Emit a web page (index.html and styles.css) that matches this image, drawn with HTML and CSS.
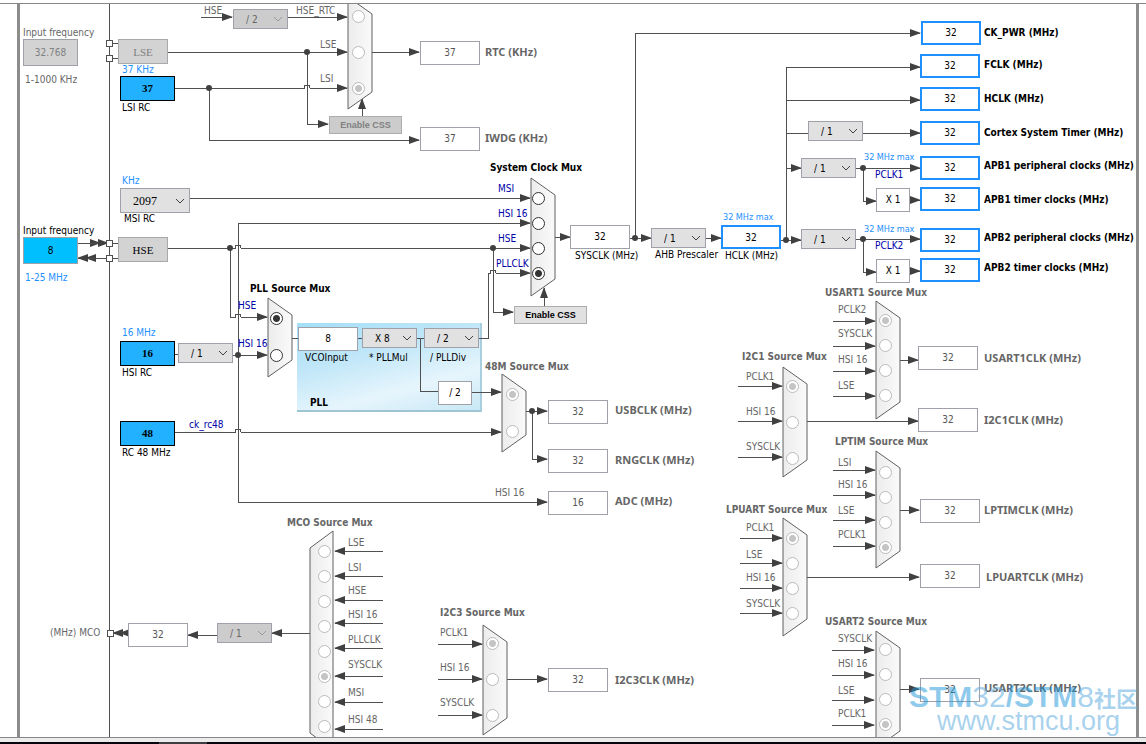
FILE: index.html
```html
<!DOCTYPE html>
<html lang="en">
<head>
  <meta charset="UTF-8" />
  <meta name="viewport" content="width=device-width, initial-scale=1.0"/>
  <title>Clock Configuration</title>
  <link rel="stylesheet" href="styles.css">
</head>
<body>
  <main class="stage" id="stage">
    <div class="chip"></div>
    <div class="pll"></div>

    <svg class="wires" aria-hidden="true">
      <defs>
        <marker id="arrow" markerWidth="11" markerHeight="8" refX="10" refY="4" orient="auto" markerUnits="userSpaceOnUse">
          <path class="head" d="M0 0 L11 4 L0 8 Z"/>
        </marker>
        <linearGradient id="muxFill">
          <stop offset="0" stop-color="#ececec"/>
          <stop offset="1" stop-color="#fafafa"/>
        </linearGradient>
      </defs>

      <!-- chip edge -->
      <path class="wire" d="M109 0 V2000"/>

      <!-- oscillators, pins -->
      <path class="wire" d="M112 43 H118 M112 58 H118 M112 243 H118 M112 258 H118"/>
      <path class="wire arrow" d="M78 243 H100"/>
      <path class="wire arrow" d="M90 243 H108"/>
      <path class="wire arrow" d="M106 258 H86"/>
      <path class="wire arrow" d="M95 258 H78"/>
      <path class="wire arrow" d="M128 633 H120"/>
      <path class="wire arrow" d="M124 633 H113"/>
      <rect class="pin" x="106" y="40" width="6" height="6"/>
      <rect class="pin" x="106" y="55" width="6" height="6"/>
      <rect class="pin" x="106" y="240" width="6" height="6"/>
      <rect class="pin" x="106" y="255" width="6" height="6"/>
      <rect class="pin" x="107" y="630" width="6" height="6"/>

      <!-- RTC / IWDG -->
      <path class="wire arrow" d="M201 17 H232"/>
      <path class="wire arrow" d="M288 17 H347"/>
      <path class="wire arrow" d="M168 52 H347"/>
      <path class="wire arrow" d="M175 88 H304 Q304 85 307 85 Q310 85 310 88 H347"/>
      <path class="wire arrow" d="M307 52 V124 H328"/>
      <path class="wire arrow" d="M209 88 V140 H419"/>
      <path class="wire arrow" d="M362 116 V99"/>
      <path class="wire arrow" d="M372 52 H419"/>

      <!-- system clock mux -->
      <path class="wire arrow" d="M190 198 H530"/>
      <path class="wire arrow" d="M238 355 V223 H530"/>
      <path class="wire arrow" d="M168 248 H235 Q235 245 238 245 Q241 245 241 248 H530"/>
      <path class="wire arrow" d="M479 338 H488 V273 H490 Q490 270 493 270 Q496 270 496 273 H530"/>
      <path class="wire arrow" d="M493 248 V312 H513"/>
      <path class="wire arrow" d="M544 306 V288"/>
      <path class="wire arrow" d="M555 237 H570"/>

      <!-- PLL -->
      <path class="wire arrow" d="M230 248 V317 H235 Q235 314 238 314 Q241 314 241 317 H267"/>
      <path class="wire" d="M175 354 H178"/>
      <path class="wire arrow" d="M233 355 H267"/>
      <path class="wire" d="M292 338 H298 M358 338 H362 M417 338 H424 M420 338 V391 H438"/>
      <path class="wire arrow" d="M472 392 H501"/>
      <path class="wire arrow" d="M175 432 H235 Q235 429 238 429 Q241 429 241 432 H501"/>
      <path class="wire arrow" d="M526 411 H547"/>
      <path class="wire arrow" d="M532 411 V459 H547"/>
      <path class="wire arrow" d="M238 355 V502 H547"/>

      <!-- HCLK tree -->
      <path class="wire arrow" d="M630 238 H651"/>
      <path class="wire arrow" d="M635 238 V33 H920"/>
      <path class="wire arrow" d="M706 238 H721"/>
      <path class="wire arrow" d="M781 240 H801"/>
      <path class="wire arrow" d="M786 240 V67 H920"/>
      <path class="wire arrow" d="M786 100 H920"/>
      <path class="wire" d="M786 133 H808"/>
      <path class="wire arrow" d="M863 133 H920"/>
      <path class="wire arrow" d="M786 168 H801"/>
      <path class="wire arrow" d="M856 168 H920"/>
      <path class="wire arrow" d="M863 168 V201 H876"/>
      <path class="wire arrow" d="M910 200 H920"/>
      <path class="wire arrow" d="M856 239 H920"/>
      <path class="wire arrow" d="M863 239 V272 H876"/>
      <path class="wire arrow" d="M910 271 H920"/>

      <!-- peripheral outputs -->
      <path class="wire arrow" d="M899 360 H918"/>
      <path class="wire arrow" d="M807 421 H918"/>
      <path class="wire arrow" d="M900 510 H919"/>
      <path class="wire arrow" d="M807 577 H919"/>
      <path class="wire arrow" d="M899 689 H919"/>
      <path class="wire arrow" d="M507 679 H547"/>
      <path class="wire arrow" d="M310 633 H272"/>
      <path class="wire arrow" d="M217 635 H188"/>

      <g class="dots">
        <circle cx="307" cy="52" r="3"/>
        <circle cx="209" cy="88" r="3"/>
        <circle cx="230" cy="248" r="3"/>
        <circle cx="493" cy="248" r="3"/>
        <circle cx="238" cy="355" r="3"/>
        <circle cx="532" cy="411" r="3"/>
        <circle cx="635" cy="238" r="3"/>
        <circle cx="786" cy="240" r="3"/>
        <circle cx="863" cy="168" r="3"/>
        <circle cx="863" cy="239" r="3"/>
      </g>

      <g id="muxShapes"></g>
    </svg>

    <div class="top-edge"></div>
    <div class="watermark">
      <div class="wm-name"><b>STM</b>32<b>/STM</b>8<span class="wm-cjk">社区</span></div>
      <div class="wm-url">www.stmcu.org</div>
    </div>
  </main>
  <footer class="scroll-edge"></footer>
  <div class="taskbar"><span></span></div>

  <script src="clock.js"></script>
</body>
</html>
```
FILE: clock.js
```js
const stage = document.getElementById("stage");
const shapes = document.getElementById("muxShapes");
let nextId = 1;

function place(tag, cls, x, y, text) {
  const el = document.createElement(tag);
  el.className = cls;
  el.style.left = x + "px";
  el.style.top = y + "px";
  if (text !== undefined) el.textContent = text;
  stage.appendChild(el);
  return el;
}

// x = left edge, y = middle of the line
function label(text, x, y, cls, target) {
  const el = place(target ? "label" : "span", "label " + (cls || ""), x, y - 6, text);
  if (target) el.htmlFor = target.id;
  return el;
}

function value(text, x, y, cls) {
  const el = place("output", "value " + (cls || ""), x, y, text);
  el.id = "n" + nextId++;
  return el;
}

function field(text, x, y, cls, off) {
  const el = place("input", cls, x, y);
  el.type = "text";
  el.value = text;
  el.disabled = !!off;
  el.id = "n" + nextId++;
  return el;
}

function select(options, x, y, name, cls, off) {
  const el = place("select", "select " + (cls || ""), x, y);
  options.forEach(o => el.add(new Option(o)));
  el.disabled = !!off;
  el.id = "n" + nextId++;
  el.setAttribute("aria-label", name);
  return el;
}

// ---- muxes: inputs are [label, label x, label y, radio y, wire y]
const muxes = [
  { name: "RTC", x: 348, y: -3, h: 112, rx: 358, on: 2, off: true, inputs: [
    ["HSE_RTC", 296, 11, 16], ["LSE", 320, 45, 52], ["LSI", 320, 79, 88]] },
  { name: "System Clock Mux", tx: 490, ty: 168, cls: "title", x: 531, y: 178, h: 118, rx: 538, on: 3, inputs: [
    ["MSI", 498, 189, 198], ["HSI 16", 498, 214, 223], ["HSE", 498, 239, 248], ["PLLCLK", 496, 264, 273]] },
  { name: "PLL Source Mux", tx: 250, ty: 289, cls: "title", x: 268, y: 298, h: 79, rx: 276, on: 0, inputs: [
    ["HSE", 238, 306, 318], ["HSI 16", 238, 344, 355]] },
  { name: "48M Source Mux", tx: 485, ty: 367, x: 502, y: 374, h: 78, rx: 512, on: 0, off: true, inputs: [
    ["", 0, 0, 394], ["", 0, 0, 431]] },
  { name: "USART1 Source Mux", tx: 825, ty: 293, x: 876, y: 301, h: 118, rx: 885, on: 0, off: true, wire: [833, 875], inputs: [
    ["PCLK2", 838, 310, 320, 321], ["SYSCLK", 838, 334, 345, 346], ["HSI 16", 838, 360, 370, 371], ["LSE", 838, 386, 395, 396]] },
  { name: "I2C1 Source Mux", tx: 742, ty: 357, x: 783, y: 367, h: 110, rx: 792, on: 0, off: true, wire: [738, 782], inputs: [
    ["PCLK1", 746, 377, 386, 386], ["HSI 16", 746, 412, 422, 421], ["SYSCLK", 746, 447, 458, 457]] },
  { name: "LPTIM Source Mux", tx: 835, ty: 442, x: 876, y: 451, h: 117, rx: 885, on: 3, off: true, wire: [833, 875], inputs: [
    ["LSI", 838, 463, 472, 470], ["HSI 16", 838, 485, 497, 495], ["LSE", 838, 511, 522, 520], ["PCLK1", 838, 535, 547, 546]] },
  { name: "LPUART Source Mux", tx: 726, ty: 510, x: 783, y: 518, h: 118, rx: 792, on: 0, off: true, wire: [740, 782], inputs: [
    ["PCLK1", 746, 528, 538, 538], ["LSE", 746, 555, 563, 563], ["HSI 16", 746, 578, 588, 588], ["SYSCLK", 746, 604, 613, 613]] },
  { name: "USART2 Source Mux", tx: 825, ty: 622, x: 876, y: 631, h: 117, rx: 885, on: 3, off: true, wire: [832, 874], inputs: [
    ["SYSCLK", 838, 639, 649, 650], ["HSI 16", 838, 664, 674, 675], ["LSE", 838, 691, 699, 700], ["PCLK1", 838, 714, 724, 725]] },
  { name: "I2C3 Source Mux", tx: 440, ty: 613, x: 483, y: 625, h: 110, rx: 492, on: 0, off: true, wire: [438, 482], inputs: [
    ["PCLK1", 440, 633, 643, 644], ["HSI 16", 440, 668, 679, 679], ["SYSCLK", 440, 703, 715, 715]] },
  { name: "MCO Source Mux", tx: 287, ty: 523, x: 333, y: 531, h: 219, rx: 324, on: 5, off: true, flip: true, wire: [383, 335], inputs: [
    ["LSE", 348, 543, 551, 551], ["LSI", 348, 568, 576, 576], ["HSE", 348, 591, 601, 600], ["HSI 16", 348, 615, 626, 623],
    ["PLLCLK", 348, 640, 651, 648], ["SYSCLK", 348, 665, 676, 676], ["MSI", 348, 693, 701, 702], ["HSI 48", 348, 720, 726, 729]] }
];

function svg(tag, attrs) {
  const el = document.createElementNS("http://www.w3.org/2000/svg", tag);
  for (const k in attrs) el.setAttribute(k, attrs[k]);
  shapes.appendChild(el);
}

muxes.forEach((m, i) => {
  const far = m.flip ? m.x - 23 : m.x + 24;
  svg("polygon", {
    class: "mux",
    points: `${m.x},${m.y} ${far},${m.y + 17} ${far},${m.y + m.h - 17} ${m.x},${m.y + m.h}`
  });
  if (m.tx) label(m.name, m.tx, m.ty, m.cls || "title off");
  m.inputs.forEach(([text, lx, ly, ry, wy], j) => {
    const r = place("input", "radio", m.rx - 6, ry - 6);
    r.type = "radio";
    r.name = "mux" + i;
    r.id = "mux" + i + "_" + j;
    r.checked = j === m.on;
    r.disabled = !!m.off;
    if (text) label(text, lx, ly, m.off ? "off" : "signal", r);
    else r.setAttribute("aria-label", m.name + " input " + (j + 1));
    if (m.wire) svg("path", { class: "wire arrow", d: `M${m.wire[0]} ${wy} H${m.wire[1]}` });
  });
});

// ---- sources
label("Input frequency", 23, 33, "off", field("32.768", 23, 39, "freq", true));
label("1-1000 KHz", 25, 80, "off");
label("Input frequency", 23, 231, "", field("8", 23, 237, "freq"));
label("1-25 MHz", 25, 278, "limit");
place("button", "osc", 118, 39, "LSE").disabled = true;
place("button", "osc", 118, 237, "HSE");
label("37 KHz", 122, 70, "limit");
label("LSI RC", 122, 108, "", value("37", 120, 76, "rc"));
label("KHz", 122, 181, "limit");
label("MSI RC", 124, 219, "", select(["2097", "65", "131", "262", "524", "1048", "4194"], 120, 188, "MSI RC", "msi"));
label("16 MHz", 122, 333, "limit");
label("HSI RC", 122, 373, "", value("16", 120, 341, "rc"));
label("RC 48 MHz", 122, 453, "", value("48", 120, 421, "rc"));
label("ck_rc48", 189, 425, "signal");
label("HSE", 204, 11, "off");
label("HSI 16", 495, 493, "off");

// ---- prescalers
select(["/ 2", "/ 4", "/ 8", "/ 16"], 233, 9, "RTC HSE divider", "", true);
select(["/ 1", "/ 4"], 178, 343, "HSI divider");
label("* PLLMul", 369, 358, "", select(["X 8", "X 3", "X 4", "X 6"], 362, 328, "PLLMul"));
label("/ PLLDiv", 430, 358, "", select(["/ 2", "/ 3", "/ 4"], 424, 328, "PLLDiv"));
label("AHB Prescaler", 655, 255, "", select(["/ 1", "/ 2", "/ 4", "/ 8"], 651, 228, "AHB Prescaler"));
select(["/ 1", "/ 8"], 808, 121, "Cortex prescaler");
select(["/ 1", "/ 2", "/ 4"], 801, 158, "APB1 prescaler");
select(["/ 1", "/ 2", "/ 4"], 801, 229, "APB2 prescaler");
select(["/ 1", "/ 2", "/ 4"], 217, 623, "MCO divider", "", true);

place("button", "css", 329, 116, "Enable CSS").disabled = true;
place("button", "css", 514, 306, "Enable CSS");

// ---- inner values
label("VCOInput", 305, 358, "", value("8", 298, 327));
label("PLL", 310, 403, "title");
value("/ 2", 438, 381, "small");
value("X 1", 876, 188, "small");
value("X 1", 876, 259, "small");
label("SYSCLK (MHz)", 575, 256, "", value("32", 570, 225));
label("HCLK (MHz)", 725, 256, "", field("32", 721, 225, "value main"));
label("32 MHz max", 723, 217, "limit max");
label("32 MHz max", 864, 157, "limit max");
label("PCLK1", 875, 175, "signal");
label("32 MHz max", 864, 229, "limit max");
label("PCLK2", 875, 246, "signal");
label("(MHz) MCO", 50, 633, "off", value("32", 128, 623, "off"));

// ---- outputs: text, value, box x, box y, label x, label y
[
  ["CK_PWR (MHz)", "32", 921, 21, 984, 33],
  ["FCLK (MHz)", "32", 920, 54, 984, 65],
  ["HCLK (MHz)", "32", 920, 87, 984, 99],
  ["Cortex System Timer (MHz)", "32", 920, 121, 984, 133],
  ["APB1 peripheral clocks (MHz)", "32", 920, 156, 984, 166],
  ["APB1 timer clocks (MHz)", "32", 920, 187, 984, 200],
  ["APB2 peripheral clocks (MHz)", "32", 920, 228, 984, 238],
  ["APB2 timer clocks (MHz)", "32", 920, 258, 984, 268]
].forEach(([t, v, x, y, lx, ly]) => label(t, lx, ly, "out", value(v, x, y, "main")));

[
  ["RTC (KHz)", "37", 420, 41, 485, 52],
  ["IWDG (KHz)", "37", 420, 127, 485, 138],
  ["USBCLK (MHz)", "32", 548, 400, 615, 410],
  ["RNGCLK (MHz)", "32", 548, 449, 615, 460],
  ["ADC (MHz)", "16", 548, 491, 615, 501],
  ["I2C3CLK (MHz)", "32", 548, 668, 615, 680],
  ["USART1CLK (MHz)", "32", 918, 346, 984, 358],
  ["I2C1CLK (MHz)", "32", 918, 408, 984, 420],
  ["LPTIMCLK (MHz)", "32", 920, 499, 984, 510],
  ["LPUARTCLK (MHz)", "32", 920, 564, 986, 577],
  ["USART2CLK (MHz)", "32", 920, 678, 984, 688]
].forEach(([t, v, x, y, lx, ly]) => label(t, lx, ly, "out periph off", value(v, x, y, "off")));
```
FILE: styles.css
```css
* {
  box-sizing: border-box;
}

body {
  margin: 0;
  height: 100vh;
  display: flex;
  flex-direction: column;
  overflow: hidden;
  background: #fff;
  color: #000;
  font-family: "DejaVu Sans Condensed", Tahoma, "DejaVu Sans", sans-serif;
  font-size: 10px;
}

.stage {
  position: relative;
  flex: 1;
  overflow: hidden;
}

.chip {
  position: absolute;
  top: 0;
  bottom: 0;
  left: 17px;
  right: 7px;
  border-left: 3px solid #8c8c8c;
  border-right: 3px solid #8c8c8c;
}

.top-edge {
  position: absolute;
  top: 0;
  left: 0;
  right: 0;
  height: 4px;
  background: #fff;
  border-bottom: 1px solid #85858a;
}

.scroll-edge {
  height: 5px;
  background: #ececec;
  border-top: 1px solid #85858a;
}

.taskbar {
  height: 2px;
  background: #05070c;
}
.taskbar span {
  display: block;
  width: 48px;
  height: 2px;
  margin-left: 159px;
  background: #3c3e42;
}

/* wires */
.wires {
  position: absolute;
  top: 0;
  left: 0;
  width: 100%;
  height: 100%;
}
.wire {
  fill: none;
  stroke: #505050;
  stroke-width: 1;
  shape-rendering: crispEdges;
}
.arrow {
  marker-end: url(#arrow);
}
.head, .dots {
  fill: #404040;
}
.pin {
  fill: #fff;
  stroke: #505050;
  shape-rendering: crispEdges;
}
.mux {
  fill: url(#muxFill);
  stroke: #606060;
}

.pll {
  position: absolute;
  left: 297px;
  top: 323px;
  width: 185px;
  height: 89px;
  background: linear-gradient(165deg, #a4dff8 0%, #bfe6f8 35%, #e6f5fc 70%, #c8e8f6 100%);
  border-right: 2px solid #a9cfdf;
  border-bottom: 2px solid #9fc4d4;
}

/* text */
.label {
  position: absolute;
  line-height: 12px;
  white-space: nowrap;
}
.off {
  color: #666;
}
.signal {
  color: #0000a8;
}
.limit {
  color: #1e90ff;
}
.limit.max {
  font-size: 9px;
}
.title, .out {
  font-weight: bold;
}
.periph {
  font-family: "Noto Sans", sans-serif;
  font-size: 11px;
}

/* boxes */
input, select, button {
  margin: 0;
  padding: 0;
  border-radius: 0;
  font: inherit;
  color: inherit;
}

.value {
  position: absolute;
  width: 60px;
  height: 24px;
  line-height: 22px;
  text-align: center;
  background: #fff;
  border: 1px solid #a0a0a8;
}
.value.off {
  color: #555;
}
.value.small {
  width: 34px;
}
.value.main {
  line-height: 20px;
  border: 2px solid #1e90ff;
}
.value.rc {
  width: 55px;
  height: 25px;
  line-height: 23px;
  background: #22b1ff;
  border-color: #000;
  font-family: "Liberation Serif", serif;
  font-size: 11px;
  font-weight: bold;
}

.freq {
  position: absolute;
  width: 55px;
  height: 27px;
  text-align: center;
  background: #00bfff;
  border: 1px solid #a0a0a8;
}
.freq:disabled {
  background: #d3d3d3;
  color: #808080;
}

.osc {
  position: absolute;
  width: 50px;
  height: 25px;
  background: #d3d3d3;
  border: 1px solid #a8a8ac;
  font-family: "Liberation Serif", serif;
  font-size: 11px;
}
.osc:disabled {
  color: #808080;
}

.css {
  position: absolute;
  width: 73px;
  height: 18px;
  background: #e1e1e1;
  border: 1px solid #adadb0;
  font-family: "Liberation Sans", Arial, sans-serif;
  font-size: 9px;
  font-weight: bold;
}
.css:disabled {
  background: #ccc;
  color: #808080;
}

.select {
  position: absolute;
  width: 55px;
  height: 20px;
  padding-left: 12px;
  appearance: none;
  border: 1px solid #a0a0a8;
  background: #e1e1e1 url("data:image/svg+xml,%3Csvg xmlns='http://www.w3.org/2000/svg' width='10' height='6'%3E%3Cpath d='M1 1l4 4 4-4' fill='none' stroke='%23404040'/%3E%3C/svg%3E") no-repeat right 4px center;
}
.select:disabled {
  background-color: #ccc;
  background-image: url("data:image/svg+xml,%3Csvg xmlns='http://www.w3.org/2000/svg' width='10' height='6'%3E%3Cpath d='M1 1l4 4 4-4' fill='none' stroke='%23999999'/%3E%3C/svg%3E");
  color: #666;
  opacity: 1;
}
.select.msi {
  width: 70px;
  height: 25px;
  font-family: "Liberation Serif", serif;
  font-size: 12px;
}

.radio {
  position: absolute;
  width: 13px;
  height: 13px;
  appearance: none;
  background: #fff;
  border: 1px solid #333;
  border-radius: 50%;
}
.radio:checked {
  background: radial-gradient(circle, #333 0 3px, #fff 4px);
}
.radio:disabled {
  border-color: #bbb;
}
.radio:disabled:checked {
  background: radial-gradient(circle, #c4c4c4 0 3px, #fff 4px);
}

.watermark {
  position: absolute;
  right: 8px;
  bottom: 4px;
  z-index: 2;
  color: rgba(110, 180, 225, 0.6);
  font-family: "Liberation Sans", Arial, sans-serif;
  pointer-events: none;
}
.wm-name {
  font-size: 30px;
  line-height: 24px;
  white-space: nowrap;
}
.wm-name b {
  color: rgba(30, 150, 215, 0.5);
}
.wm-cjk {
  font-family: "Noto Sans CJK SC", sans-serif;
  font-size: 22px;
  font-weight: bold;
}
.wm-url {
  padding-left: 28px;
  font-size: 27px;
  line-height: 24px;
}
```
